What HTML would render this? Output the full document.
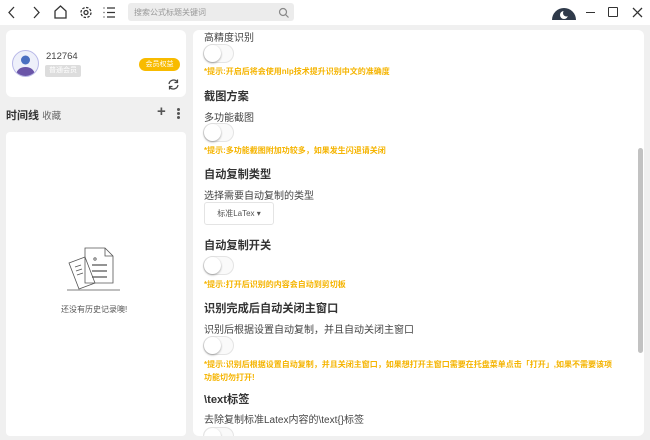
<!DOCTYPE html><html><head><meta charset="utf-8"><style>
*{margin:0;padding:0;box-sizing:border-box}
body{width:650px;height:440px;overflow:hidden;background:#f0f0f0;font-family:"Liberation Sans","Noto Sans CJK SC",sans-serif;position:relative;color:#333}
.a{position:absolute}
.top{left:0;top:0;width:650px;height:25px;background:#fff}
.card{background:#fff;border-radius:6px}
.t{font-size:10px;color:#444;white-space:nowrap}
.h{font-size:11.2px;font-weight:bold;color:#333;white-space:nowrap}
.tip{font-size:8px;color:#f5b400;font-weight:bold;white-space:nowrap}
.tg{width:31px;height:19px;border-radius:10px;border:1px solid #e4e4e4;background:#fafafa}
.tg:after{content:"";position:absolute;left:0;top:0;width:17px;height:17px;border-radius:50%;background:#fff;box-shadow:0 1px 2px rgba(0,0,0,.35)}
</style></head><body>
<div class="a top"></div>
<svg class="a" style="left:0;top:0" width="130" height="25" fill="none" stroke="#333" stroke-width="1.3">
<path d="M14 7 L9 12.5 L14 18"/><path d="M34 7 L39 12.5 L34 18"/>
<path d="M55 18 V11 L60.5 6 L66 11 V18 Z"/>
<circle cx="86" cy="12.5" r="2"/><circle cx="86" cy="12.5" r="5" stroke-dasharray="2.5 1.4"/>
<path d="M107 8h8M107 12.5h8M107 17h8M103.5 8h1M103.5 12.5h1M103.5 17h1"/>
</svg>
<div class="a" style="left:128px;top:3px;width:166px;height:18px;background:#ececec;border-radius:3px"></div>
<div class="a t" style="left:134px;top:7px;font-size:8px;color:#999">搜索公式标题关键词</div>
<svg class="a" style="left:278px;top:7px" width="12" height="12" fill="none" stroke="#888" stroke-width="1.2"><circle cx="5" cy="5" r="3.5"/><path d="M7.5 7.5L10.5 10.5"/></svg>
<svg class="a" style="left:550px;top:4px" width="28" height="16"><path d="M2 16 A12 12 0 0 1 26 16Z" fill="#2f3a4a"/><circle cx="14" cy="11" r="4" fill="#fff"/><circle cx="16.5" cy="9" r="3.5" fill="#2f3a4a"/></svg>
<div class="a" style="left:586px;top:12px;width:9px;height:1.3px;background:#333"></div>
<div class="a" style="left:608px;top:7px;width:10px;height:10px;border:1.3px solid #333;border-radius:1px"></div>
<svg class="a" style="left:632px;top:7px" width="11" height="11" stroke="#333" stroke-width="1.3"><path d="M1 1L10 10M10 1L1 10"/></svg>

<div class="a card" style="left:6px;top:30px;width:180px;height:67px"></div>
<svg class="a" style="left:12px;top:50px" width="27" height="27"><defs><clipPath id="c"><circle cx="13.5" cy="13.5" r="12.5"/></clipPath></defs><circle cx="13.5" cy="13.5" r="13" fill="#eef0fa" stroke="#b8b8e8"/><g clip-path="url(#c)"><circle cx="13.5" cy="10" r="4.5" fill="#4a6fc0"/><ellipse cx="13.5" cy="24" rx="9" ry="7" fill="#6a55a8"/></g></svg>
<div class="a t" style="left:46px;top:51px;font-size:9.5px">212764</div>
<div class="a" style="left:45px;top:65px;width:36px;height:12px;background:#ddd;border-radius:2px;font-size:7px;color:#fff;text-align:center;line-height:12px">普通会员</div>
<div class="a" style="left:139px;top:58px;width:41px;height:13px;background:#f8bb00;border-radius:7px;font-size:7px;color:#fff;text-align:center;line-height:13px">会员权益</div>
<svg class="a" style="left:167px;top:78px" width="13" height="13" fill="none" stroke="#444" stroke-width="1.2"><path d="M2 6 A4.7 4.7 0 0 1 10.5 4 M11 7 A4.7 4.7 0 0 1 2.5 9"/><path d="M10.5 1.5V4.5H7.5M2.5 11.5V8.5H5.5"/></svg>
<div class="a h" style="left:6px;top:107px;font-size:11px">时间线 <span style="font-weight:normal;font-size:9.5px;color:#666">收藏</span></div>
<div class="a" style="left:157px;top:103px;font-size:15px;font-weight:bold;color:#555">+</div>
<div class="a" style="left:177px;top:108px;width:3px;height:3px;background:#555;border-radius:50%;box-shadow:0 4px 0 #555,0 8px 0 #555"></div>
<div class="a card" style="left:6px;top:132px;width:180px;height:304px;border-radius:4px"></div>
<svg class="a" style="left:65px;top:243px" width="70" height="55" fill="none" stroke="#555" stroke-width=".8"><path d="M4 20L20 14L30 40L14 46Z"/><path d="M20 5H40L48 13V40H20Z"/><path d="M40 5V13H48"/><path d="M27 22h15M27 28h15M27 34h15" stroke-width="1.2"/><path d="M2 47H55"/><path d="M10 24l6-2M11 28l6-2M12 32l6-2"/><circle cx="30" cy="16" r="1.2"/></svg>
<div class="a t" style="left:61px;top:304px;font-size:8px;color:#555">还没有历史记录噢!</div>

<div class="a card" style="left:193px;top:30px;width:451px;height:406px"></div>
<div class="a" style="left:638px;top:148px;width:5px;height:205px;background:#c2c2c2;border-radius:3px"></div>
<div class="a t" style="left:204px;top:29px">高精度识别</div>
<div class="a tg" style="left:203px;top:44px"></div>
<div class="a tip" style="left:204px;top:66px">*提示:开启后将会使用nlp技术提升识别中文的准确度</div>
<div class="a h" style="left:204px;top:88px">截图方案</div>
<div class="a t" style="left:204px;top:109px">多功能截图</div>
<div class="a tg" style="left:203px;top:123px"></div>
<div class="a tip" style="left:204px;top:145px">*提示:多功能截图附加功较多，如果发生闪退请关闭</div>
<div class="a h" style="left:204px;top:166px">自动复制类型</div>
<div class="a t" style="left:204px;top:187px">选择需要自动复制的类型</div>
<div class="a" style="left:204px;top:202px;width:70px;height:23px;border:1px solid #e4e4e4;border-radius:3px;font-size:8px;color:#555;text-align:center;line-height:21px">标准LaTex ▾</div>
<div class="a h" style="left:204px;top:237px">自动复制开关</div>
<div class="a tg" style="left:203px;top:256px"></div>
<div class="a tip" style="left:204px;top:279px">*提示:打开后识别的内容会自动到剪切板</div>
<div class="a h" style="left:204px;top:300px">识别完成后自动关闭主窗口</div>
<div class="a t" style="left:204px;top:321px">识别后根据设置自动复制，并且自动关闭主窗口</div>
<div class="a tg" style="left:203px;top:336px"></div>
<div class="a tip" style="left:204px;top:358px;line-height:13px">*提示:识别后根据设置自动复制，并且关闭主窗口，如果想打开主窗口需要在托盘菜单点击「打开」,如果不需要该项<br>功能切勿打开!</div>
<div class="a h" style="left:204px;top:391px">\text标签</div>
<div class="a t" style="left:204px;top:411px">去除复制标准Latex内容的\text{}标签</div>
<div class="a tg" style="left:203px;top:427px;height:9px;border-bottom:none;border-radius:10px 10px 0 0;overflow:hidden"></div>
</body></html>
